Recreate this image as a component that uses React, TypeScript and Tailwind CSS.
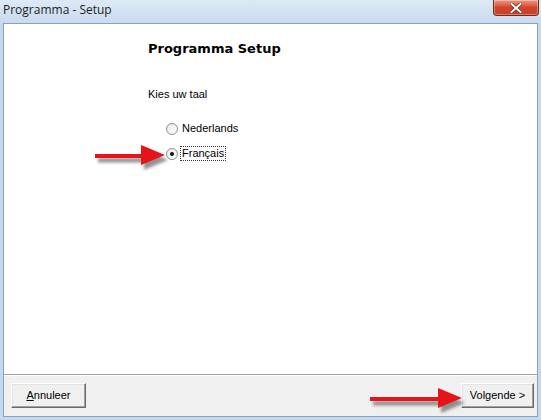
import React from "react";

function Arrow({ width }: { width: number }) {
  const h = 28;
  const c = h / 2;
  return (
    <svg width={width + 8} height={h + 6} viewBox={`0 0 ${width + 8} ${h + 6}`}>
      <defs>
        <filter id={`blur${width}`} x="-20%" y="-50%" width="140%" height="200%">
          <feGaussianBlur stdDeviation="1.6" />
        </filter>
      </defs>
      <g transform="translate(3,4)" fill="#6e6e6e" opacity="0.75" filter={`url(#blur${width})`}>
        <rect x="0" y={c - 2} width={width - 22} height="4.5" />
        <polygon points={`${width - 24},${c - 11} ${width},${c} ${width - 24},${c + 10}`} />
      </g>
      <g fill="#e4141a">
        <rect x="0" y={c - 2} width={width - 22} height="4" />
        <polygon points={`${width - 24},${c - 11} ${width},${c - 1} ${width - 24},${c + 9}`} />
      </g>
    </svg>
  );
}

function Radio({ checked }: { checked: boolean }) {
  return (
    <span className="relative inline-flex h-[12px] w-[12px] items-center justify-center rounded-full border border-[#8f8f8f] bg-gradient-to-br from-[#e8e8e8] to-[#ffffff]">
      {checked && <span className="h-[4px] w-[4px] rounded-full bg-[#111]" />}
    </span>
  );
}

function WinButton({ children }: { children: React.ReactNode }) {
  return (
    <div className="flex h-[25px] items-center justify-center border border-t-white border-l-white border-r-[#6b6b6b] border-b-[#6b6b6b] bg-[#f0f0f0] shadow-[inset_-1px_-1px_0_#a0a0a0,inset_1px_1px_0_#e3e3e3] text-[11px] text-[#000]">
      {children}
    </div>
  );
}

export default function App() {
  return (
    <div
      className="relative flex h-[420px] w-[541px] flex-col overflow-hidden bg-[#c4d8ef]"
      style={{ fontFamily: "Tahoma, 'DejaVu Sans', sans-serif" }}
    >
      {/* title bar */}
      <div className="relative flex h-[23px] shrink-0 items-start bg-gradient-to-b from-[#dde9f6] to-[#c9dbf0]">
        <span
          className="ml-[3px] mt-[3px] text-[12px] leading-[14px] text-[#1e1e1e]"
          style={{ fontFamily: "'Open Sans', 'Noto Sans', sans-serif" }}
        >
          Programma - Setup
        </span>
        <div className="ml-auto mr-[2px] flex h-[16px] w-[46px] items-center justify-center rounded-b-[4px] border border-t-0 border-[#6e2a1c] bg-gradient-to-b from-[#eb9a84] via-[#d4432a] to-[#c63f25] shadow-[inset_0_0_0_1px_rgba(255,255,255,0.35)]">
          <svg width="12" height="10" viewBox="0 0 12 10">
            <path d="M1.5 1 L10.5 9 M10.5 1 L1.5 9" stroke="#5a2a20" strokeWidth="3.4" strokeLinecap="square" />
            <path d="M1.5 1 L10.5 9 M10.5 1 L1.5 9" stroke="#ffffff" strokeWidth="2" strokeLinecap="square" />
          </svg>
        </div>
      </div>

      {/* client area */}
      <div className="mx-[3px] mb-[3px] flex flex-1 flex-col border border-[#8aa0bb] bg-[#f0f0f0]">
        <div className="flex h-[351px] flex-col border-b border-b-[#a0a0a0] bg-white pl-[144px]">
          <div
            className="mt-[17px] text-[13px] font-bold leading-[16px] text-black"
            style={{ fontFamily: "Tahoma, 'DejaVu Sans', sans-serif" }}
          >
            Programma Setup
          </div>
          <div className="mt-[31px] text-[11px] leading-[13px] text-black" style={{ fontFamily: "'Liberation Sans', sans-serif" }}>
            Kies uw taal
          </div>
          <div className="ml-[18px] mt-[21px] flex flex-col gap-[11px] text-[11px] leading-[13px] text-black" style={{ fontFamily: "'Liberation Sans', sans-serif" }}>
            <div className="flex items-center gap-[3px]">
              <Radio checked={false} />
              <span className="px-[1px]">Nederlands</span>
            </div>
            <div className="flex items-center gap-[2px]">
              <Radio checked={true} />
              <span className="border border-dotted border-[#333] px-[1px]">Français</span>
            </div>
          </div>
        </div>
        <div className="h-[1px] bg-white" />
        <div className="flex flex-1 items-start justify-between pl-[7px] pr-[3px] pt-[7px]" style={{ fontFamily: "'Liberation Sans', sans-serif" }}>
          <div className="w-[75px]">
            <WinButton>
              <span>
                <span className="underline">A</span>nnuleer
              </span>
            </WinButton>
          </div>
          <div className="w-[73px]">
            <WinButton>Volgende &gt;</WinButton>
          </div>
        </div>
      </div>

      {/* annotation arrows */}
      <div className="absolute left-[95px] top-[142px]">
        <Arrow width={70} />
      </div>
      <div className="absolute left-[370px] top-[385px]">
        <Arrow width={92} />
      </div>
    </div>
  );
}
